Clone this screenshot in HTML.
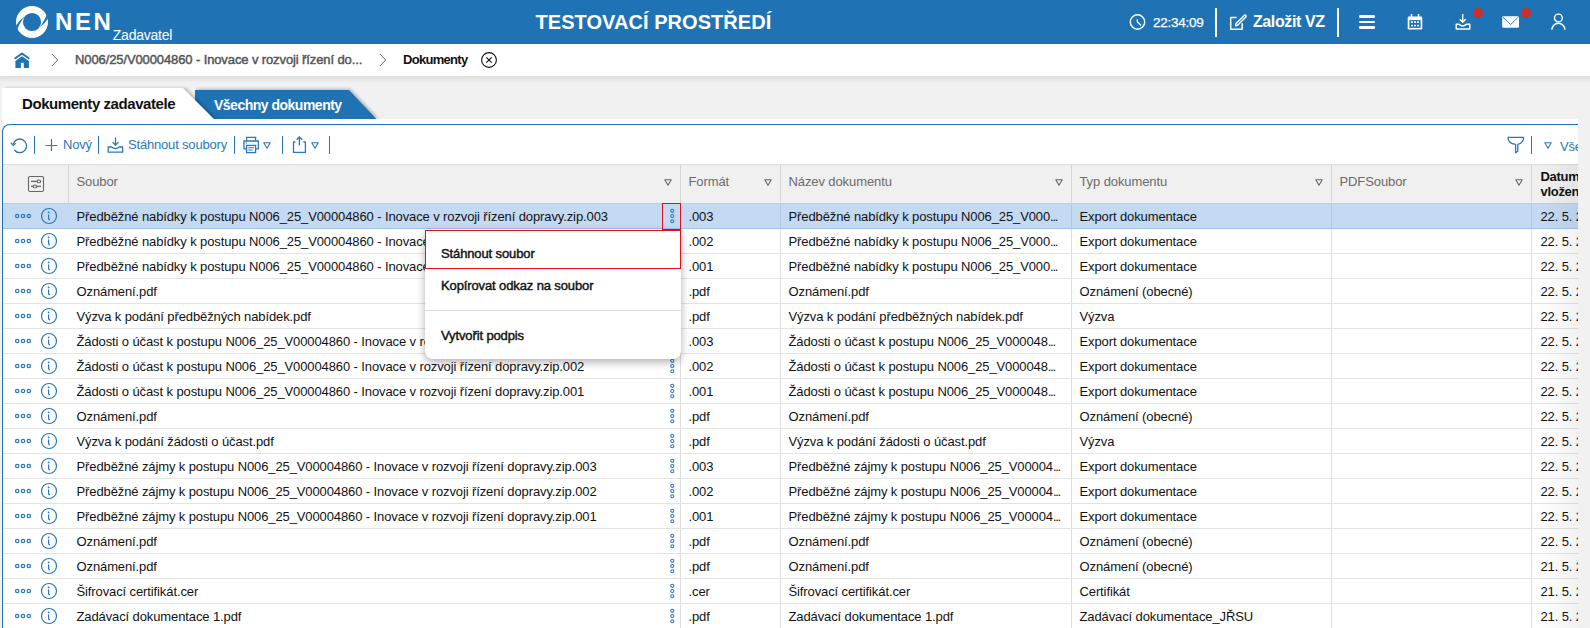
<!DOCTYPE html>
<html><head><meta charset="utf-8">
<style>
*{box-sizing:border-box;margin:0;padding:0}
html,body{width:1590px;height:628px;overflow:hidden;background:#f1f1f1;font-family:"Liberation Sans",sans-serif;position:relative}
.a{position:absolute}
.t{white-space:nowrap;line-height:1}
svg{position:absolute;overflow:visible}
#hdr{left:0;top:0;width:1590px;height:44px;background:#1f73b4;color:#fff}
#bc{left:0;top:44px;width:1590px;height:32px;background:#fff}
#bcsh{left:0;top:76px;width:1590px;height:7px;background:linear-gradient(#dddddd,#f1f1f1)}
#clip{left:0;top:76px;width:1578px;height:552px;overflow:hidden}
#panel{left:2px;top:48px;width:1600px;height:600px;background:#fff;border-top:1px solid #1f73b4;border-left:1px solid #1f73b4;border-top-left-radius:8px}
.sep{position:absolute;width:1px;height:18px;top:136px;background:#2a78b8}
.tb{color:#2a78b8;font-size:13px;letter-spacing:-0.18px}
#th{left:3px;top:164px;width:1600px;height:40px;background:#f0f0f0;border-top:1px solid #dcdcdc;border-bottom:1px solid #c9c9c9}
.hc{position:absolute;top:0;height:39px;border-left:1px solid #d6d6d6}
.htx{position:absolute;top:10px;font-size:13px;color:#6b6b6b;letter-spacing:-0.1px;white-space:nowrap;line-height:13px}
.tri{position:absolute;top:14px}
.row{position:absolute;left:3px;width:1600px;height:25px;background:#fff;border-bottom:1px solid #e3e3e3}
.row.sel{background:#c4daf3;border-bottom:1px solid #9fc3ee}
.c{position:absolute;top:0;height:24px;line-height:26px;font-size:13px;color:#121212;white-space:nowrap;overflow:hidden;text-overflow:ellipsis;letter-spacing:-0.11px;padding-left:7.5px;border-left:1px solid #dedede}
.c1{left:65px;width:612px;border-left:none;padding-left:8.5px}
.c2{left:677px;width:100px}
.c3{left:777px;width:291px;text-overflow:clip}
.el{letter-spacing:-1.3px}
.c4{left:1068px;width:260px}
.c5{left:1328px;width:200px}
.c6{left:1528px;width:100px;padding-left:8.5px}
.sel .c{border-left-color:#b3c8df}
.sel .c1{border-left:none}
.ic{position:absolute;left:0;top:0}
#rshade{left:1538px;top:164px;width:40px;height:464px;background:linear-gradient(90deg,rgba(0,0,0,0),rgba(0,0,0,0.05))}
</style></head><body>
<!-- HEADER -->
<div id="hdr" class="a">
  <svg style="left:16px;top:6px" width="32" height="32" viewBox="0 0 32 32">
    <circle cx="16" cy="16" r="16" fill="#fff"/>
    <circle cx="16" cy="16" r="9.1" fill="#1f73b4"/>
    <g transform="translate(16,16)">
      <path d="M-8.6,-4.4 Q-13.4,-1.2 -16.6,4.6 L-16,11 Q-13.8,2.6 -7.2,-5.8 Z" fill="#1f73b4"/>
      <path d="M-8.6,-4.4 Q-13.4,-1.2 -16.6,4.6 L-16,11 Q-13.8,2.6 -7.2,-5.8 Z" fill="#1f73b4" transform="rotate(180)"/>
    </g>
  </svg>
  <div class="a t" style="left:55px;top:9.8px;font-size:24px;font-weight:700;letter-spacing:2.6px">NEN</div>
  <div class="a t" style="left:112.8px;top:28px;font-size:14px;letter-spacing:-0.25px">Zadavatel</div>
  <div class="a t" style="left:535.5px;top:12px;font-size:20px;font-weight:700;letter-spacing:0.05px">TESTOVACÍ PROSTŘEDÍ</div>
  <svg style="left:1129px;top:14px" width="17" height="17" viewBox="0 0 17 17">
    <circle cx="8.5" cy="8" r="7.2" fill="none" stroke="#fff" stroke-width="1.4"/>
    <path d="M8.3 5.3 V7.8 L12 11.5" fill="none" stroke="#fff" stroke-width="1.3"/>
  </svg>
  <div class="a t" style="left:1153px;top:16px;font-size:13.5px;letter-spacing:-0.25px;-webkit-text-stroke:0.25px #fff">22:34:09</div>
  <div class="a" style="left:1215px;top:8px;width:2px;height:29px;background:#fff"></div>
  <svg style="left:1229px;top:13px" width="18" height="18" viewBox="0 0 18 18">
    <path d="M7.5 4.6 H1.7 V16.2 H13.2 V10.3" fill="none" stroke="#fff" stroke-width="1.5" stroke-linejoin="round"/>
    <path d="M7 10.6 L15.2 2.4 a1 1 0 0 1 1.6 1.6 L8.6 12.2 L6.6 12.7 Z" fill="none" stroke="#fff" stroke-width="1.4" stroke-linejoin="round"/>
  </svg>
  <div class="a t" style="left:1253px;top:13.5px;font-size:16px;font-weight:700;letter-spacing:-0.4px">Založit VZ</div>
  <div class="a" style="left:1337px;top:8px;width:2px;height:29px;background:#fff"></div>
  <!-- hamburger -->
  <div class="a" style="left:1359px;top:15px;width:16px;height:2.6px;background:#fff;border-radius:1.3px"></div>
  <div class="a" style="left:1359px;top:20.8px;width:16px;height:2.6px;background:#fff;border-radius:1.3px"></div>
  <div class="a" style="left:1359px;top:26.4px;width:16px;height:2.6px;background:#fff;border-radius:1.3px"></div>
  <!-- calendar -->
  <svg style="left:1406px;top:13px" width="18" height="18" viewBox="0 0 18 18">
    <rect x="1.7" y="3.5" width="14.6" height="13" rx="1.2" fill="#fff"/>
    <rect x="3.4" y="7.1" width="11.2" height="7.8" fill="#1f73b4"/>
    <g fill="#fff"><rect x="5" y="8.3" width="2" height="1.6"/><rect x="8" y="8.3" width="2" height="1.6"/><rect x="11" y="8.3" width="2" height="1.6"/><rect x="5" y="11.8" width="2" height="1.6"/><rect x="8" y="11.8" width="2" height="1.6"/><rect x="11" y="11.8" width="2" height="1.6"/></g>
    <rect x="4.7" y="1" width="1.6" height="4" fill="#fff"/><rect x="11.7" y="1" width="1.6" height="4" fill="#fff"/>
  </svg>
  <!-- download inbox -->
  <svg style="left:1454px;top:13px" width="18" height="18" viewBox="0 0 18 18">
    <path d="M8.7 1 V9" stroke="#fff" stroke-width="1.4" fill="none"/>
    <path d="M5.7 6.3 L8.7 9.3 L11.7 6.3" stroke="#fff" stroke-width="1.4" fill="none"/>
    <path d="M2.2 11.2 H5 Q8.7 14.6 12.4 11.2 H15.8 V16 H2.2 Z" stroke="#fff" stroke-width="1.4" fill="none" stroke-linejoin="round"/>
  </svg>
  <div class="a" style="left:1473px;top:8px;width:10px;height:10px;border-radius:50%;background:#c92f2b"></div>
  <!-- mail -->
  <svg style="left:1501px;top:15px" width="20" height="14" viewBox="0 0 20 14">
    <rect x="1.2" y="1.2" width="16.8" height="11.5" rx="1.3" fill="#fff"/>
    <path d="M1.8 2 L9.6 9.6 L17.4 2" stroke="#1f73b4" stroke-width="0.9" fill="none"/>
  </svg>
  <div class="a" style="left:1521px;top:8px;width:10px;height:10px;border-radius:50%;background:#c92f2b"></div>
  <!-- user -->
  <svg style="left:1550px;top:13px" width="18" height="18" viewBox="0 0 18 18">
    <circle cx="8.4" cy="5" r="3.9" fill="none" stroke="#fff" stroke-width="1.4"/>
    <path d="M1.8 16.8 A6.6 6.6 0 0 1 15 16.8" fill="none" stroke="#fff" stroke-width="1.4"/>
  </svg>
</div>
<!-- BREADCRUMB -->
<div id="bc" class="a">
  <svg style="left:14px;top:8px" width="16" height="16" viewBox="0 0 16 16">
    <path d="M1.3 6.3 L8 1.4 L14.7 6.3" fill="none" stroke="#1f73b4" stroke-width="1.9" stroke-linecap="round" stroke-linejoin="round"/>
    <path d="M1.4 9 L8 4.3 L14.9 9 V15.9 H9.8 V10.7 H6.9 V15.9 H1.4 Z" fill="#1f73b4"/>
  </svg>
  <svg style="left:51px;top:9px" width="8" height="14" viewBox="0 0 8 14">
    <path d="M1 1 L6.6 7 L1 13" fill="none" stroke="#6a6a6a" stroke-width="1"/>
  </svg>
  <div class="a t" style="left:75px;top:9px;font-size:13px;font-weight:400;color:#555;letter-spacing:-0.11px;-webkit-text-stroke:0.45px #555">N006/25/V00004860 - Inovace v rozvoji řízení do...</div>
  <svg style="left:379px;top:9px" width="8" height="14" viewBox="0 0 8 14">
    <path d="M1 1 L6.6 7 L1 13" fill="none" stroke="#6a6a6a" stroke-width="1"/>
  </svg>
  <div class="a t" style="left:403px;top:9px;font-size:13px;font-weight:700;color:#111;letter-spacing:-0.7px">Dokumenty</div>
  <svg style="left:480px;top:7px" width="18" height="18" viewBox="0 0 18 18">
    <circle cx="9" cy="9" r="7.4" fill="none" stroke="#111" stroke-width="1.1"/>
    <path d="M6.3 6.3 L11.7 11.7 M11.7 6.3 L6.3 11.7" stroke="#111" stroke-width="1.1"/>
  </svg>
</div>
<div id="bcsh" class="a"></div>
<!-- CONTENT (page coords offset: top 76) -->
<div id="clip" class="a">
<div class="a" style="left:0;top:-76px;width:1590px;height:628px">
  <!-- tabs -->
  <svg style="left:0;top:84px" width="400" height="40" viewBox="0 0 400 40">
    <defs>
      <filter id="tsh" x="-10%" y="-30%" width="120%" height="160%"><feGaussianBlur stdDeviation="1.5"/></filter>
    </defs>
    <path d="M195 6 H349 L377 35.5 H195 Z" fill="#000" opacity="0.22" filter="url(#tsh)" transform="translate(1.5,-1.2)"/>
    <path d="M195 6 H349 L377 35.5 H195 Z" fill="#1f73b4"/>
    <path d="M2 4 H183 L214.4 35.5 H2 Z" fill="#000" opacity="0.22" filter="url(#tsh)" transform="translate(3,0)"/>
    <path d="M2 4 H183 L214.4 35.5 H2 Z" fill="#fff"/>
  </svg>
  <div class="a t" style="left:22px;top:95.5px;font-size:15px;font-weight:700;color:#111;letter-spacing:-0.43px">Dokumenty zadavatele</div>
  <div class="a t" style="left:214px;top:98px;font-size:14px;font-weight:700;color:#fff;letter-spacing:-0.5px">Všechny dokumenty</div>
  <div class="a" style="left:2px;top:119px;width:1600px;height:6px;background:#fff"></div>
  <div id="panel" class="a" style="top:124px"></div>
  <!-- toolbar -->
  <svg style="left:10px;top:137.5px" width="18" height="16" viewBox="0 0 18 16">
    <path d="M3.2 6.2 A6.8 6.8 0 1 1 4.4 12" fill="none" stroke="#2a78b8" stroke-width="1.3"/>
    <path d="M0.8 4.6 L3.2 7.4 L5.8 5.2" fill="none" stroke="#2a78b8" stroke-width="1.3"/>
  </svg>
  <div class="sep" style="left:34px"></div>
  <svg style="left:44px;top:138px" width="14" height="14" viewBox="0 0 14 14">
    <path d="M7.5 1 V13 M1.5 7.5 H13.5" stroke="#2a78b8" stroke-width="1.2"/>
  </svg>
  <div class="a t tb" style="left:63px;top:138px">Nový</div>
  <div class="sep" style="left:98px"></div>
  <svg style="left:107px;top:137px" width="17" height="17" viewBox="0 0 17 17">
    <path d="M8.5 0.6 V7.8 M5.6 5.2 L8.5 8.1 L11.4 5.2" fill="none" stroke="#2a78b8" stroke-width="1.3"/>
    <path d="M1.2 10 H4.6 Q8.5 13.2 12.4 10 H15.6 V15.2 H1.2 Z" fill="none" stroke="#2a78b8" stroke-width="1.3" stroke-linejoin="round"/>
  </svg>
  <div class="a t tb" style="left:128px;top:138px">Stáhnout soubory</div>
  <div class="sep" style="left:234px"></div>
  <svg style="left:243px;top:136px" width="17" height="18" viewBox="0 0 17 18">
    <path d="M3.6 5 V1.3 H12.6 V5" fill="none" stroke="#2a78b8" stroke-width="1.3"/>
    <path d="M3.6 12.8 H1 V5 H15.4 V12.8 H12.6" fill="none" stroke="#2a78b8" stroke-width="1.3" stroke-linejoin="round"/>
    <rect x="3.6" y="9.4" width="9" height="7.2" fill="none" stroke="#2a78b8" stroke-width="1.3"/>
    <path d="M5.2 11.8 H11 M5.2 14 H9.6 M2.6 7 H4" stroke="#2a78b8" stroke-width="1.1"/>
  </svg>
  <svg style="left:263px;top:142px" width="8" height="7" viewBox="0 0 8 7"><path d="M0.8 0.8 H7.2 L4 6.2 Z" fill="none" stroke="#2a78b8" stroke-width="1.1" stroke-linejoin="round"/></svg>
  <div class="sep" style="left:282px"></div>
  <svg style="left:292px;top:136px" width="15" height="18" viewBox="0 0 15 18">
    <path d="M3.4 6 H1.5 V16.4 H13.4 V6 H11.4" fill="none" stroke="#2a78b8" stroke-width="1.3" stroke-linejoin="round"/>
    <path d="M7.4 1 V9.4 M4.6 3.8 L7.4 1 L10.2 3.8" fill="none" stroke="#2a78b8" stroke-width="1.3"/>
  </svg>
  <svg style="left:311px;top:142px" width="8" height="7" viewBox="0 0 8 7"><path d="M0.8 0.8 H7.2 L4 6.2 Z" fill="none" stroke="#2a78b8" stroke-width="1.1" stroke-linejoin="round"/></svg>
  <div class="sep" style="left:329px"></div>
  <svg style="left:1507px;top:136px" width="18" height="18" viewBox="0 0 18 18">
    <path d="M1 1.4 H16.6 C16.6 5.8 13.6 7.6 10.8 8.4 V15.2 L8.6 16.6 V8.4 C4 7.6 1 5.8 1 1.4 Z" fill="none" stroke="#2a78b8" stroke-width="1.3" stroke-linejoin="round"/>
  </svg>
  <div class="sep" style="left:1531px"></div>
  <svg style="left:1544px;top:142px" width="8" height="7" viewBox="0 0 8 7"><path d="M0.8 0.8 H7.2 L4 6.2 Z" fill="none" stroke="#2a78b8" stroke-width="1.1" stroke-linejoin="round"/></svg>
  <div class="a t tb" style="left:1560px;top:140px">Všechny</div>
  <!-- table header -->
  <div id="th" class="a">
    <svg style="left:25px;top:11px" width="17" height="17" viewBox="0 0 17 17">
      <rect x="0.5" y="0.5" width="15" height="15" rx="1.5" fill="none" stroke="#666" stroke-width="1.1"/>
      <path d="M3 5.4 H13 M3 10.4 H13" stroke="#666" stroke-width="1.1"/>
      <ellipse cx="10.8" cy="5.4" rx="1.8" ry="1.4" fill="#f0f0f0" stroke="#666" stroke-width="1.1"/>
      <ellipse cx="7" cy="10.4" rx="1.8" ry="1.4" fill="#f0f0f0" stroke="#666" stroke-width="1.1"/>
    </svg>
    <div class="hc" style="left:65px;width:612px"><div class="htx" style="left:7.5px">Soubor</div>
      <svg class="tri" style="left:595px" width="8" height="7" viewBox="0 0 8 7"><path d="M0.8 0.8 H7.2 L4 6.2 Z" fill="none" stroke="#666" stroke-width="1.1" stroke-linejoin="round"/></svg></div>
    <div class="hc" style="left:677px;width:100px"><div class="htx" style="left:7.5px">Formát</div>
      <svg class="tri" style="left:83px" width="8" height="7" viewBox="0 0 8 7"><path d="M0.8 0.8 H7.2 L4 6.2 Z" fill="none" stroke="#666" stroke-width="1.1" stroke-linejoin="round"/></svg></div>
    <div class="hc" style="left:777px;width:291px"><div class="htx" style="left:7.5px">Název dokumentu</div>
      <svg class="tri" style="left:274px" width="8" height="7" viewBox="0 0 8 7"><path d="M0.8 0.8 H7.2 L4 6.2 Z" fill="none" stroke="#666" stroke-width="1.1" stroke-linejoin="round"/></svg></div>
    <div class="hc" style="left:1068px;width:260px"><div class="htx" style="left:7.5px">Typ dokumentu</div>
      <svg class="tri" style="left:243px" width="8" height="7" viewBox="0 0 8 7"><path d="M0.8 0.8 H7.2 L4 6.2 Z" fill="none" stroke="#666" stroke-width="1.1" stroke-linejoin="round"/></svg></div>
    <div class="hc" style="left:1328px;width:200px"><div class="htx" style="left:7.5px">PDFSoubor</div>
      <svg class="tri" style="left:183px" width="8" height="7" viewBox="0 0 8 7"><path d="M0.8 0.8 H7.2 L4 6.2 Z" fill="none" stroke="#666" stroke-width="1.1" stroke-linejoin="round"/></svg></div>
    <div class="hc" style="left:1528px;width:100px"><div class="htx" style="left:8.5px;top:3.5px;color:#111;font-weight:700;line-height:15px;letter-spacing:-0.3px">Datum<br>vložení</div></div>
  </div>
<div class="row sel" style="top:204px"><svg class="ic" width="700" height="24" viewBox="0 0 700 24"><g fill="none" stroke="#2a78b8" stroke-width="1.2"><circle cx="14.2" cy="12" r="1.7"/><circle cx="20" cy="12" r="1.7"/><circle cx="25.8" cy="12" r="1.7"/><circle cx="46" cy="12" r="7.5"/></g><circle cx="45.6" cy="8.4" r="0.9" fill="#2a78b8"/><path d="M45.6 10.6 V14.6 Q45.8 15.8 47 16" fill="none" stroke="#2a78b8" stroke-width="1.2"/><g fill="none" stroke="#2f6fd2" stroke-width="1.05"><circle cx="669.3" cy="6.8" r="1.55"/><circle cx="669.3" cy="12" r="1.55"/><circle cx="669.3" cy="17.2" r="1.55"/></g></svg><div class="c c1">Předběžné nabídky k postupu N006_25_V00004860 - Inovace v rozvoji řízení dopravy.zip.003</div><div class="c c2">.003</div><div class="c c3">Předběžné nabídky k postupu N006_25_V000<span class="el">...</span></div><div class="c c4">Export dokumentace</div><div class="c c5"></div><div class="c c6">22. 5. 2025</div></div>
<div class="row" style="top:229px"><svg class="ic" width="700" height="24" viewBox="0 0 700 24"><g fill="none" stroke="#2a78b8" stroke-width="1.2"><circle cx="14.2" cy="12" r="1.7"/><circle cx="20" cy="12" r="1.7"/><circle cx="25.8" cy="12" r="1.7"/><circle cx="46" cy="12" r="7.5"/></g><circle cx="45.6" cy="8.4" r="0.9" fill="#2a78b8"/><path d="M45.6 10.6 V14.6 Q45.8 15.8 47 16" fill="none" stroke="#2a78b8" stroke-width="1.2"/><g fill="none" stroke="#2f6fd2" stroke-width="1.05"><circle cx="669.3" cy="6.8" r="1.55"/><circle cx="669.3" cy="12" r="1.55"/><circle cx="669.3" cy="17.2" r="1.55"/></g></svg><div class="c c1">Předběžné nabídky k postupu N006_25_V00004860 - Inovace v rozvoji řízení dopravy.zip.002</div><div class="c c2">.002</div><div class="c c3">Předběžné nabídky k postupu N006_25_V000<span class="el">...</span></div><div class="c c4">Export dokumentace</div><div class="c c5"></div><div class="c c6">22. 5. 2025</div></div>
<div class="row" style="top:254px"><svg class="ic" width="700" height="24" viewBox="0 0 700 24"><g fill="none" stroke="#2a78b8" stroke-width="1.2"><circle cx="14.2" cy="12" r="1.7"/><circle cx="20" cy="12" r="1.7"/><circle cx="25.8" cy="12" r="1.7"/><circle cx="46" cy="12" r="7.5"/></g><circle cx="45.6" cy="8.4" r="0.9" fill="#2a78b8"/><path d="M45.6 10.6 V14.6 Q45.8 15.8 47 16" fill="none" stroke="#2a78b8" stroke-width="1.2"/><g fill="none" stroke="#2f6fd2" stroke-width="1.05"><circle cx="669.3" cy="6.8" r="1.55"/><circle cx="669.3" cy="12" r="1.55"/><circle cx="669.3" cy="17.2" r="1.55"/></g></svg><div class="c c1">Předběžné nabídky k postupu N006_25_V00004860 - Inovace v rozvoji řízení dopravy.zip.001</div><div class="c c2">.001</div><div class="c c3">Předběžné nabídky k postupu N006_25_V000<span class="el">...</span></div><div class="c c4">Export dokumentace</div><div class="c c5"></div><div class="c c6">22. 5. 2025</div></div>
<div class="row" style="top:279px"><svg class="ic" width="700" height="24" viewBox="0 0 700 24"><g fill="none" stroke="#2a78b8" stroke-width="1.2"><circle cx="14.2" cy="12" r="1.7"/><circle cx="20" cy="12" r="1.7"/><circle cx="25.8" cy="12" r="1.7"/><circle cx="46" cy="12" r="7.5"/></g><circle cx="45.6" cy="8.4" r="0.9" fill="#2a78b8"/><path d="M45.6 10.6 V14.6 Q45.8 15.8 47 16" fill="none" stroke="#2a78b8" stroke-width="1.2"/><g fill="none" stroke="#2f6fd2" stroke-width="1.05"><circle cx="669.3" cy="6.8" r="1.55"/><circle cx="669.3" cy="12" r="1.55"/><circle cx="669.3" cy="17.2" r="1.55"/></g></svg><div class="c c1">Oznámení.pdf</div><div class="c c2">.pdf</div><div class="c c3">Oznámení.pdf</div><div class="c c4">Oznámení (obecné)</div><div class="c c5"></div><div class="c c6">22. 5. 2025</div></div>
<div class="row" style="top:304px"><svg class="ic" width="700" height="24" viewBox="0 0 700 24"><g fill="none" stroke="#2a78b8" stroke-width="1.2"><circle cx="14.2" cy="12" r="1.7"/><circle cx="20" cy="12" r="1.7"/><circle cx="25.8" cy="12" r="1.7"/><circle cx="46" cy="12" r="7.5"/></g><circle cx="45.6" cy="8.4" r="0.9" fill="#2a78b8"/><path d="M45.6 10.6 V14.6 Q45.8 15.8 47 16" fill="none" stroke="#2a78b8" stroke-width="1.2"/><g fill="none" stroke="#2f6fd2" stroke-width="1.05"><circle cx="669.3" cy="6.8" r="1.55"/><circle cx="669.3" cy="12" r="1.55"/><circle cx="669.3" cy="17.2" r="1.55"/></g></svg><div class="c c1">Výzva k podání předběžných nabídek.pdf</div><div class="c c2">.pdf</div><div class="c c3">Výzva k podání předběžných nabídek.pdf</div><div class="c c4">Výzva</div><div class="c c5"></div><div class="c c6">22. 5. 2025</div></div>
<div class="row" style="top:329px"><svg class="ic" width="700" height="24" viewBox="0 0 700 24"><g fill="none" stroke="#2a78b8" stroke-width="1.2"><circle cx="14.2" cy="12" r="1.7"/><circle cx="20" cy="12" r="1.7"/><circle cx="25.8" cy="12" r="1.7"/><circle cx="46" cy="12" r="7.5"/></g><circle cx="45.6" cy="8.4" r="0.9" fill="#2a78b8"/><path d="M45.6 10.6 V14.6 Q45.8 15.8 47 16" fill="none" stroke="#2a78b8" stroke-width="1.2"/><g fill="none" stroke="#2f6fd2" stroke-width="1.05"><circle cx="669.3" cy="6.8" r="1.55"/><circle cx="669.3" cy="12" r="1.55"/><circle cx="669.3" cy="17.2" r="1.55"/></g></svg><div class="c c1">Žádosti o účast k postupu N006_25_V00004860 - Inovace v rozvoji řízení dopravy.zip.003</div><div class="c c2">.003</div><div class="c c3">Žádosti o účast k postupu N006_25_V000048<span class="el">...</span></div><div class="c c4">Export dokumentace</div><div class="c c5"></div><div class="c c6">22. 5. 2025</div></div>
<div class="row" style="top:354px"><svg class="ic" width="700" height="24" viewBox="0 0 700 24"><g fill="none" stroke="#2a78b8" stroke-width="1.2"><circle cx="14.2" cy="12" r="1.7"/><circle cx="20" cy="12" r="1.7"/><circle cx="25.8" cy="12" r="1.7"/><circle cx="46" cy="12" r="7.5"/></g><circle cx="45.6" cy="8.4" r="0.9" fill="#2a78b8"/><path d="M45.6 10.6 V14.6 Q45.8 15.8 47 16" fill="none" stroke="#2a78b8" stroke-width="1.2"/><g fill="none" stroke="#2f6fd2" stroke-width="1.05"><circle cx="669.3" cy="6.8" r="1.55"/><circle cx="669.3" cy="12" r="1.55"/><circle cx="669.3" cy="17.2" r="1.55"/></g></svg><div class="c c1">Žádosti o účast k postupu N006_25_V00004860 - Inovace v rozvoji řízení dopravy.zip.002</div><div class="c c2">.002</div><div class="c c3">Žádosti o účast k postupu N006_25_V000048<span class="el">...</span></div><div class="c c4">Export dokumentace</div><div class="c c5"></div><div class="c c6">22. 5. 2025</div></div>
<div class="row" style="top:379px"><svg class="ic" width="700" height="24" viewBox="0 0 700 24"><g fill="none" stroke="#2a78b8" stroke-width="1.2"><circle cx="14.2" cy="12" r="1.7"/><circle cx="20" cy="12" r="1.7"/><circle cx="25.8" cy="12" r="1.7"/><circle cx="46" cy="12" r="7.5"/></g><circle cx="45.6" cy="8.4" r="0.9" fill="#2a78b8"/><path d="M45.6 10.6 V14.6 Q45.8 15.8 47 16" fill="none" stroke="#2a78b8" stroke-width="1.2"/><g fill="none" stroke="#2f6fd2" stroke-width="1.05"><circle cx="669.3" cy="6.8" r="1.55"/><circle cx="669.3" cy="12" r="1.55"/><circle cx="669.3" cy="17.2" r="1.55"/></g></svg><div class="c c1">Žádosti o účast k postupu N006_25_V00004860 - Inovace v rozvoji řízení dopravy.zip.001</div><div class="c c2">.001</div><div class="c c3">Žádosti o účast k postupu N006_25_V000048<span class="el">...</span></div><div class="c c4">Export dokumentace</div><div class="c c5"></div><div class="c c6">22. 5. 2025</div></div>
<div class="row" style="top:404px"><svg class="ic" width="700" height="24" viewBox="0 0 700 24"><g fill="none" stroke="#2a78b8" stroke-width="1.2"><circle cx="14.2" cy="12" r="1.7"/><circle cx="20" cy="12" r="1.7"/><circle cx="25.8" cy="12" r="1.7"/><circle cx="46" cy="12" r="7.5"/></g><circle cx="45.6" cy="8.4" r="0.9" fill="#2a78b8"/><path d="M45.6 10.6 V14.6 Q45.8 15.8 47 16" fill="none" stroke="#2a78b8" stroke-width="1.2"/><g fill="none" stroke="#2f6fd2" stroke-width="1.05"><circle cx="669.3" cy="6.8" r="1.55"/><circle cx="669.3" cy="12" r="1.55"/><circle cx="669.3" cy="17.2" r="1.55"/></g></svg><div class="c c1">Oznámení.pdf</div><div class="c c2">.pdf</div><div class="c c3">Oznámení.pdf</div><div class="c c4">Oznámení (obecné)</div><div class="c c5"></div><div class="c c6">22. 5. 2025</div></div>
<div class="row" style="top:429px"><svg class="ic" width="700" height="24" viewBox="0 0 700 24"><g fill="none" stroke="#2a78b8" stroke-width="1.2"><circle cx="14.2" cy="12" r="1.7"/><circle cx="20" cy="12" r="1.7"/><circle cx="25.8" cy="12" r="1.7"/><circle cx="46" cy="12" r="7.5"/></g><circle cx="45.6" cy="8.4" r="0.9" fill="#2a78b8"/><path d="M45.6 10.6 V14.6 Q45.8 15.8 47 16" fill="none" stroke="#2a78b8" stroke-width="1.2"/><g fill="none" stroke="#2f6fd2" stroke-width="1.05"><circle cx="669.3" cy="6.8" r="1.55"/><circle cx="669.3" cy="12" r="1.55"/><circle cx="669.3" cy="17.2" r="1.55"/></g></svg><div class="c c1">Výzva k podání žádosti o účast.pdf</div><div class="c c2">.pdf</div><div class="c c3">Výzva k podání žádosti o účast.pdf</div><div class="c c4">Výzva</div><div class="c c5"></div><div class="c c6">22. 5. 2025</div></div>
<div class="row" style="top:454px"><svg class="ic" width="700" height="24" viewBox="0 0 700 24"><g fill="none" stroke="#2a78b8" stroke-width="1.2"><circle cx="14.2" cy="12" r="1.7"/><circle cx="20" cy="12" r="1.7"/><circle cx="25.8" cy="12" r="1.7"/><circle cx="46" cy="12" r="7.5"/></g><circle cx="45.6" cy="8.4" r="0.9" fill="#2a78b8"/><path d="M45.6 10.6 V14.6 Q45.8 15.8 47 16" fill="none" stroke="#2a78b8" stroke-width="1.2"/><g fill="none" stroke="#2f6fd2" stroke-width="1.05"><circle cx="669.3" cy="6.8" r="1.55"/><circle cx="669.3" cy="12" r="1.55"/><circle cx="669.3" cy="17.2" r="1.55"/></g></svg><div class="c c1">Předběžné zájmy k postupu N006_25_V00004860 - Inovace v rozvoji řízení dopravy.zip.003</div><div class="c c2">.003</div><div class="c c3">Předběžné zájmy k postupu N006_25_V00004<span class="el">...</span></div><div class="c c4">Export dokumentace</div><div class="c c5"></div><div class="c c6">22. 5. 2025</div></div>
<div class="row" style="top:479px"><svg class="ic" width="700" height="24" viewBox="0 0 700 24"><g fill="none" stroke="#2a78b8" stroke-width="1.2"><circle cx="14.2" cy="12" r="1.7"/><circle cx="20" cy="12" r="1.7"/><circle cx="25.8" cy="12" r="1.7"/><circle cx="46" cy="12" r="7.5"/></g><circle cx="45.6" cy="8.4" r="0.9" fill="#2a78b8"/><path d="M45.6 10.6 V14.6 Q45.8 15.8 47 16" fill="none" stroke="#2a78b8" stroke-width="1.2"/><g fill="none" stroke="#2f6fd2" stroke-width="1.05"><circle cx="669.3" cy="6.8" r="1.55"/><circle cx="669.3" cy="12" r="1.55"/><circle cx="669.3" cy="17.2" r="1.55"/></g></svg><div class="c c1">Předběžné zájmy k postupu N006_25_V00004860 - Inovace v rozvoji řízení dopravy.zip.002</div><div class="c c2">.002</div><div class="c c3">Předběžné zájmy k postupu N006_25_V00004<span class="el">...</span></div><div class="c c4">Export dokumentace</div><div class="c c5"></div><div class="c c6">22. 5. 2025</div></div>
<div class="row" style="top:504px"><svg class="ic" width="700" height="24" viewBox="0 0 700 24"><g fill="none" stroke="#2a78b8" stroke-width="1.2"><circle cx="14.2" cy="12" r="1.7"/><circle cx="20" cy="12" r="1.7"/><circle cx="25.8" cy="12" r="1.7"/><circle cx="46" cy="12" r="7.5"/></g><circle cx="45.6" cy="8.4" r="0.9" fill="#2a78b8"/><path d="M45.6 10.6 V14.6 Q45.8 15.8 47 16" fill="none" stroke="#2a78b8" stroke-width="1.2"/><g fill="none" stroke="#2f6fd2" stroke-width="1.05"><circle cx="669.3" cy="6.8" r="1.55"/><circle cx="669.3" cy="12" r="1.55"/><circle cx="669.3" cy="17.2" r="1.55"/></g></svg><div class="c c1">Předběžné zájmy k postupu N006_25_V00004860 - Inovace v rozvoji řízení dopravy.zip.001</div><div class="c c2">.001</div><div class="c c3">Předběžné zájmy k postupu N006_25_V00004<span class="el">...</span></div><div class="c c4">Export dokumentace</div><div class="c c5"></div><div class="c c6">22. 5. 2025</div></div>
<div class="row" style="top:529px"><svg class="ic" width="700" height="24" viewBox="0 0 700 24"><g fill="none" stroke="#2a78b8" stroke-width="1.2"><circle cx="14.2" cy="12" r="1.7"/><circle cx="20" cy="12" r="1.7"/><circle cx="25.8" cy="12" r="1.7"/><circle cx="46" cy="12" r="7.5"/></g><circle cx="45.6" cy="8.4" r="0.9" fill="#2a78b8"/><path d="M45.6 10.6 V14.6 Q45.8 15.8 47 16" fill="none" stroke="#2a78b8" stroke-width="1.2"/><g fill="none" stroke="#2f6fd2" stroke-width="1.05"><circle cx="669.3" cy="6.8" r="1.55"/><circle cx="669.3" cy="12" r="1.55"/><circle cx="669.3" cy="17.2" r="1.55"/></g></svg><div class="c c1">Oznámení.pdf</div><div class="c c2">.pdf</div><div class="c c3">Oznámení.pdf</div><div class="c c4">Oznámení (obecné)</div><div class="c c5"></div><div class="c c6">22. 5. 2025</div></div>
<div class="row" style="top:554px"><svg class="ic" width="700" height="24" viewBox="0 0 700 24"><g fill="none" stroke="#2a78b8" stroke-width="1.2"><circle cx="14.2" cy="12" r="1.7"/><circle cx="20" cy="12" r="1.7"/><circle cx="25.8" cy="12" r="1.7"/><circle cx="46" cy="12" r="7.5"/></g><circle cx="45.6" cy="8.4" r="0.9" fill="#2a78b8"/><path d="M45.6 10.6 V14.6 Q45.8 15.8 47 16" fill="none" stroke="#2a78b8" stroke-width="1.2"/><g fill="none" stroke="#2f6fd2" stroke-width="1.05"><circle cx="669.3" cy="6.8" r="1.55"/><circle cx="669.3" cy="12" r="1.55"/><circle cx="669.3" cy="17.2" r="1.55"/></g></svg><div class="c c1">Oznámení.pdf</div><div class="c c2">.pdf</div><div class="c c3">Oznámení.pdf</div><div class="c c4">Oznámení (obecné)</div><div class="c c5"></div><div class="c c6">21. 5. 2025</div></div>
<div class="row" style="top:579px"><svg class="ic" width="700" height="24" viewBox="0 0 700 24"><g fill="none" stroke="#2a78b8" stroke-width="1.2"><circle cx="14.2" cy="12" r="1.7"/><circle cx="20" cy="12" r="1.7"/><circle cx="25.8" cy="12" r="1.7"/><circle cx="46" cy="12" r="7.5"/></g><circle cx="45.6" cy="8.4" r="0.9" fill="#2a78b8"/><path d="M45.6 10.6 V14.6 Q45.8 15.8 47 16" fill="none" stroke="#2a78b8" stroke-width="1.2"/><g fill="none" stroke="#2f6fd2" stroke-width="1.05"><circle cx="669.3" cy="6.8" r="1.55"/><circle cx="669.3" cy="12" r="1.55"/><circle cx="669.3" cy="17.2" r="1.55"/></g></svg><div class="c c1">Šifrovací certifikát.cer</div><div class="c c2">.cer</div><div class="c c3">Šifrovací certifikát.cer</div><div class="c c4">Certifikát</div><div class="c c5"></div><div class="c c6">21. 5. 2025</div></div>
<div class="row" style="top:604px"><svg class="ic" width="700" height="24" viewBox="0 0 700 24"><g fill="none" stroke="#2a78b8" stroke-width="1.2"><circle cx="14.2" cy="12" r="1.7"/><circle cx="20" cy="12" r="1.7"/><circle cx="25.8" cy="12" r="1.7"/><circle cx="46" cy="12" r="7.5"/></g><circle cx="45.6" cy="8.4" r="0.9" fill="#2a78b8"/><path d="M45.6 10.6 V14.6 Q45.8 15.8 47 16" fill="none" stroke="#2a78b8" stroke-width="1.2"/><g fill="none" stroke="#2f6fd2" stroke-width="1.05"><circle cx="669.3" cy="6.8" r="1.55"/><circle cx="669.3" cy="12" r="1.55"/><circle cx="669.3" cy="17.2" r="1.55"/></g></svg><div class="c c1">Zadávací dokumentace 1.pdf</div><div class="c c2">.pdf</div><div class="c c3">Zadávací dokumentace 1.pdf</div><div class="c c4">Zadávací dokumentace_JŘSU</div><div class="c c5"></div><div class="c c6">21. 5. 2025</div></div>  <div id="rshade" class="a"></div>
</div>
</div>
<!-- popup -->
<div class="a" style="left:662px;top:203px;width:19px;height:27px;border:1.6px solid #e0121c"></div>
<div class="a" style="left:425px;top:230px;width:256px;height:129px;background:#fff;border-radius:0 0 8px 8px;box-shadow:0 3px 8px rgba(0,0,0,0.32)">
  <div class="a" style="left:0;top:0;width:256px;height:39px;border:1.6px solid #e0121c"></div>
  <div class="a t" style="left:16px;top:17px;font-size:13px;font-weight:400;color:#141414;letter-spacing:-0.12px;-webkit-text-stroke:0.45px #141414">Stáhnout soubor</div>
  <div class="a t" style="left:16px;top:49px;font-size:13px;font-weight:400;color:#141414;letter-spacing:-0.12px;-webkit-text-stroke:0.45px #141414">Kopírovat odkaz na soubor</div>
  <div class="a" style="left:0;top:80px;width:256px;height:1px;background:#dcdcdc"></div>
  <div class="a t" style="left:16px;top:99px;font-size:13px;font-weight:400;color:#141414;letter-spacing:-0.12px;-webkit-text-stroke:0.45px #141414">Vytvořit podpis</div>
</div>
</body></html>
